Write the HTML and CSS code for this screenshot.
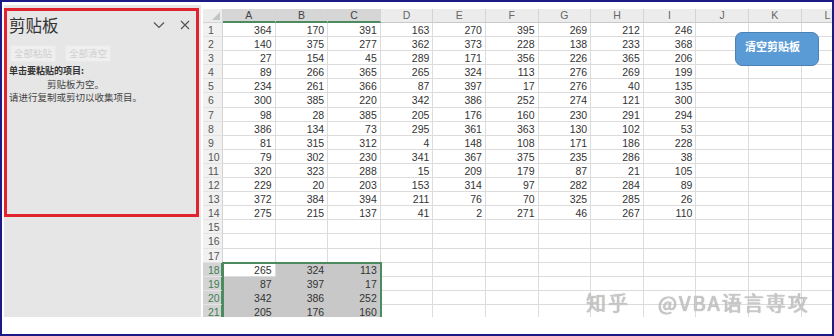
FILE: index.html
```html
<!DOCTYPE html>
<html lang="zh-CN">
<head>
    <meta charset="UTF-8">
    <title>剪贴板</title>
    <link rel="stylesheet" href="styles.css">
</head>
<body>
    <div class="screen">
        <div class="main">
            <aside class="pane">
                <div class="pane-box">
                    <div class="pane-head">
                        <span class="pane-title">剪贴板</span>
                        <svg class="pane-icon" width="12" height="8" viewBox="0 0 12 8"><path d="M1 1.5 L6 6.5 L11 1.5" fill="none" stroke="#555" stroke-width="1.2"/></svg>
                        <svg class="pane-icon" width="10" height="10" viewBox="0 0 10 10"><path d="M1 1 L9 9 M9 1 L1 9" fill="none" stroke="#555" stroke-width="1.2"/></svg>
                    </div>
                    <div class="pane-buttons">
                        <span class="pane-btn">全部粘贴</span>
                        <span class="pane-btn">全部清空</span>
                    </div>
                    <div class="pane-label">单击要粘贴的项目:</div>
                    <div class="pane-empty">剪贴板为空。</div>
                    <div class="pane-hint">请进行复制或剪切以收集项目。</div>
                </div>
            </aside>
            <div class="sheet">
                <div class="grid" id="grid"></div>
                <div class="selection"></div>
                <div class="shape-btn">清空剪贴板</div>
            </div>
        </div>
        <div class="watermark"><span>知乎</span><span>@VBA语言専攻</span></div>
    </div>
    <script>
        const cols = ['A', 'B', 'C', 'D', 'E', 'F', 'G', 'H', 'I', 'J', 'K', 'L'];
        const data = [
            [364, 170, 391, 163, 270, 395, 269, 212, 246],
            [140, 375, 277, 362, 373, 228, 138, 233, 368],
            [27, 154, 45, 289, 171, 356, 226, 365, 206],
            [89, 266, 365, 265, 324, 113, 276, 269, 199],
            [234, 261, 366, 87, 397, 17, 276, 40, 135],
            [300, 385, 220, 342, 386, 252, 274, 121, 300],
            [98, 28, 385, 205, 176, 160, 230, 291, 294],
            [386, 134, 73, 295, 361, 363, 130, 102, 53],
            [81, 315, 312, 4, 148, 108, 171, 186, 228],
            [79, 302, 230, 341, 367, 375, 235, 286, 38],
            [320, 323, 288, 15, 209, 179, 87, 21, 105],
            [229, 20, 203, 153, 314, 97, 282, 284, 89],
            [372, 384, 394, 211, 76, 70, 325, 285, 26],
            [275, 215, 137, 41, 2, 271, 46, 267, 110],
            [], [], [],
            [265, 324, 113],
            [87, 397, 17],
            [342, 386, 252],
            [205, 176, 160]
        ];

        const grid = document.getElementById('grid');
        let html = '<div class="corner"></div>';
        cols.forEach((c, i) => {
            html += `<div class="col-head${i < 3 ? ' sel' : ''}">${c}</div>`;
        });
        data.forEach((row, r) => {
            const n = r + 1;
            const inSel = n >= 18;
            html += `<div class="row-head${inSel ? ' sel' : ''}">${n}</div>`;
            cols.forEach((c, i) => {
                const v = row[i] !== undefined ? row[i] : '';
                let cls = 'cell';
                if (inSel && i < 3 && !(n === 18 && i === 0)) cls += ' fill';
                html += `<div class="${cls}">${v}</div>`;
            });
        });
        grid.innerHTML = html;
    </script>
</body>
</html>
```

FILE: styles.css
```css
* {
    box-sizing: border-box;
}

body {
    margin: 0;
    background: #fff;
    font-family: "Liberation Sans", "Noto Sans CJK SC", sans-serif;
}

.screen {
    width: 834px;
    height: 336px;
    border: 2px solid #1c1a86;
    background: #fff;
    position: relative;
    overflow: hidden;
}

.main {
    display: flex;
    height: 315px;
}

/* clipboard pane */
.pane {
    width: 197px;
    margin: 3px 0 0 2px;
    background: #e6e6e6;
    font-family: "Noto Sans CJK SC", sans-serif;
}

.pane-box {
    width: 195px;
    height: 209px;
    margin-top: 3px;
    border: 3px solid #e0232d;
    padding: 2px 0 0 2px;
}

.pane-head {
    display: flex;
    align-items: center;
    height: 24px;
}

.pane-title {
    font-size: 16.5px;
    color: #333;
    flex: 1;
}

.pane-icon {
    margin-right: 15px;
}

.pane-icon:last-child {
    margin-right: 6px;
}

.pane-buttons {
    display: flex;
    gap: 9px;
    margin: 8px 0 0 1px;
}

.pane-btn {
    width: 46px;
    height: 17px;
    background: #efefef;
    border: 1px solid #e9e9e9;
    color: #cfcfcf;
    font-size: 9.5px;
    line-height: 15px;
    text-align: center;
}

.pane-label {
    margin-top: 2px;
    font-size: 9px;
    font-weight: bold;
    color: #333;
    line-height: 14px;
}

.pane-empty {
    margin-left: 38px;
    font-size: 9.5px;
    color: #444;
    line-height: 13px;
}

.pane-hint {
    font-size: 9.5px;
    color: #444;
    line-height: 13px;
}

/* worksheet */
.sheet {
    flex: 1;
    margin-left: 2px;
    padding-top: 7px;
    position: relative;
    overflow: hidden;
}

.grid {
    display: grid;
    grid-template-columns: 20px repeat(12, 52.6px);
    grid-template-rows: 14px;
    grid-auto-rows: 14.1px;
    font-size: 10.5px;
    color: #333;
}

.corner {
    background: #ececec;
    border-right: 1px solid #d4d4d4;
    border-bottom: 1px solid #d4d4d4;
    position: relative;
}

.corner::after {
    content: "";
    position: absolute;
    right: 2px;
    bottom: 2px;
    border-left: 8px solid transparent;
    border-bottom: 8px solid #c4c4c4;
}

.col-head {
    background: #ececec;
    color: #666;
    text-align: center;
    line-height: 13px;
    border-right: 1px solid #d4d4d4;
    border-bottom: 1px solid #c8c8c8;
}

.col-head.sel {
    background: #d6d6d6;
    color: #444;
    border-bottom: 2px solid #4c8a60;
}

.row-head {
    background: #f1f1f1;
    color: #555;
    padding-left: 5px;
    line-height: 14px;
    border-right: 1px solid #d4d4d4;
    border-bottom: 1px solid #e4e4e4;
}

.row-head.sel {
    background: #d4d4d4;
    color: #3f7f55;
    border-right: 2px solid #4c8a60;
}

.cell {
    text-align: right;
    padding-right: 3px;
    line-height: 14px;
    border-right: 1px solid #dcdcdc;
    border-bottom: 1px solid #dcdcdc;
    white-space: nowrap;
    overflow: hidden;
}

.cell.fill {
    background: #c8c8c8;
    border-color: #c8c8c8;
}

/* selected range A18:C21, drawn over the cells */
.selection {
    position: absolute;
    left: 19px;
    top: 260px;
    width: 160px;
    height: 58px;
    border: 2px solid #4c8a60;
    pointer-events: none;
}

.shape-btn {
    position: absolute;
    left: 532px;
    top: 30px;
    width: 84px;
    height: 34px;
    background: #5b9bd5;
    border: 1px solid #4a82b8;
    border-radius: 7px;
    color: #fff;
    font-family: "Noto Sans CJK SC", sans-serif;
    font-weight: bold;
    font-size: 11px;
    padding: 5px 0 0 9px;
}

.watermark {
    position: absolute;
    left: 584px;
    top: 286px;
    display: flex;
    gap: 28px;
    font-family: "Noto Sans CJK SC", sans-serif;
    font-size: 20px;
    letter-spacing: 2px;
    color: #c9c9c9;
    text-shadow: 0 0 1px #8a8a8a;
}
```
